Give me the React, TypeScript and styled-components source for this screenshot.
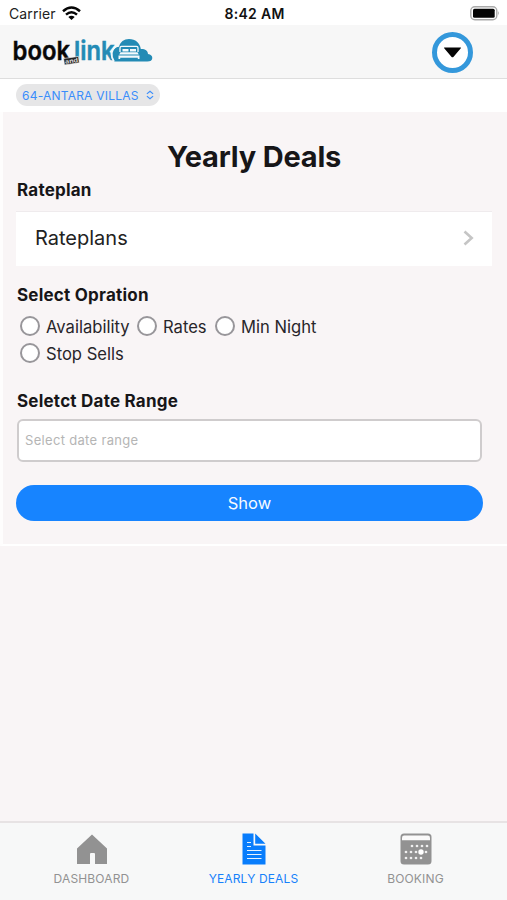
import React from 'react';
import styled, { createGlobalStyle } from 'styled-components';

const Global = createGlobalStyle`
  * { box-sizing: border-box; }
  body { margin: 0; background: #fff; font-family: Inter, "Liberation Sans", sans-serif; color: #171618; }
  h1, h2, p { margin: 0; }
  button { font: inherit; border: 0; padding: 0; cursor: pointer; }
  svg { display: block; flex: none; }
`;

const Screen = styled.div`
  width: 507px;
  height: 900px;
  display: flex;
  flex-direction: column;
  overflow: hidden;
  background: #f9f5f6;
`;

const StatusBar = styled.div`
  height: 25px;
  flex: none;
  display: grid;
  grid-template-columns: 1fr auto 1fr;
  align-items: center;
  padding: 2px 7px 0 9px;
  background: #fff;
`;

const Carrier = styled.div`
  display: flex;
  align-items: center;
  gap: 6px;
  font-size: 14px;
  line-height: 20px;
  letter-spacing: 0.1px;
  color: #222;
`;

const Clock = styled.div`
  font-size: 14px;
  font-weight: 600;
  line-height: 20px;
  letter-spacing: 0.3px;
  color: #111;
`;

const BatterySlot = styled.div`
  display: flex;
  justify-content: flex-end;
`;

const Header = styled.header`
  height: 54px;
  flex: none;
  display: flex;
  align-items: center;
  justify-content: space-between;
  padding: 1px 34px 0 12px;
  background: #f7f7f7;
  border-bottom: 1px solid #dedede;
`;

const MenuButton = styled.button`
  width: 41px;
  height: 41px;
  display: grid;
  place-items: center;
  border: 5px solid #3498db;
  border-radius: 50%;
  background: #fff;
`;

const PropertyBar = styled.div`
  height: 33px;
  flex: none;
  padding: 5px 16px;
  background: #fff;
`;

const PropertyChip = styled.button`
  width: 144px;
  height: 22px;
  display: flex;
  align-items: center;
  justify-content: space-between;
  padding: 0 6px 0 6px;
  border-radius: 11px;
  background: #e6e6e7;
  color: #3a8dfb;
  font-size: 12px;
  letter-spacing: 0.22px;
  white-space: nowrap;
`;

const Panel = styled.main`
  height: 434px;
  flex: none;
  display: flex;
  flex-direction: column;
  padding: 28px 15px 0 13px;
  border-left: 3px solid #fefdfd;
  border-bottom: 2px solid #fff;
`;

const Title = styled.h1`
  height: 34px;
  text-align: center;
  font-size: 29px;
  font-weight: 700;
  line-height: 34px;
  letter-spacing: -0.2px;
`;

const Label = styled.h2<{ $top: number }>`
  height: 22px;
  margin-top: ${(p) => p.$top}px;
  padding-left: 1px;
  font-size: 17px;
  font-weight: 700;
  line-height: 22px;
  letter-spacing: 0.22px;
`;

const RatePlanRow = styled.button`
  height: 55px;
  margin-top: 10px;
  flex: none;
  display: flex;
  align-items: center;
  justify-content: space-between;
  padding: 0 18px 2px 19px;
  border-top: 1px solid #efebed;
  background: #fff;
  color: #222;
  font-size: 20px;
`;

const Options = styled.div`
  height: 54px;
  margin-top: 7px;
  padding-left: 4px;
  display: flex;
  flex-wrap: wrap;
  align-content: flex-start;
  width: 320px;
`;

const Option = styled.label<{ $width: number }>`
  width: ${(p) => p.$width}px;
  height: 27px;
  display: flex;
  align-items: center;
  gap: 6px;
  font-size: 16.600px;
  line-height: 25px;
  white-space: nowrap;
  color: #28262a;

  span { padding-top: 2px; }
`;

const Radio = styled.input`
  appearance: none;
  width: 20px;
  height: 20px;
  flex: none;
  margin: 0 0 2px;
  border: 2px solid #98969a;
  border-radius: 50%;
  background: #fff;
`;

const DateInput = styled.input`
  width: 465px;
  height: 43px;
  margin: 7px 0 0 1px;
  flex: none;
  padding: 0 6px 1px;
  border: 2px solid #cfcccd;
  border-radius: 6px;
  background: #fff;
  font: 13px Inter, sans-serif;
  letter-spacing: 0.32px;
  outline: 0;

  &::placeholder { color: #b5b5b5; opacity: 1; }
`;

const ShowButton = styled.button`
  width: 467px;
  height: 36px;
  margin-top: 23px;
  flex: none;
  border-radius: 18px;
  background: #1784ff;
  color: #f5faff;
  font-size: 16.500px;
`;

const TabBar = styled.nav`
  height: 79px;
  flex: none;
  margin-top: auto;
  display: grid;
  grid-template-columns: 183px 141px 183px;
  background: #f7f8f8;
  border-top: 2px solid #e7e3e4;
`;

const Tab = styled.button<{ $active?: boolean }>`
  display: flex;
  flex-direction: column;
  align-items: center;
  padding-top: 10px;
  background: none;
  color: ${(p) => (p.$active ? '#1681fb' : '#929292')};
  font-size: 12px;
  line-height: 16px;
  letter-spacing: 0.15px;
  white-space: nowrap;

  svg { margin-bottom: 4px; }
`;

const Logo = () => (
  <svg width="142" height="40" viewBox="12 32 142 40" role="img" aria-label="booklink">
    <g fontFamily="Inter, sans-serif" fontSize="26">
      <text x="12.500" y="60" textLength="57.500" lengthAdjust="spacingAndGlyphs" fontWeight="600" fill="#080808" stroke="#080808" strokeWidth=".4">book</text>
      <text x="74" y="60" textLength="40.500" lengthAdjust="spacingAndGlyphs" fontWeight="600" fill="#238bb5" stroke="#238bb5" strokeWidth=".5">link</text>
    </g>
    <g transform="rotate(-8 71 61)">
      <rect x="64" y="57.500" width="15" height="6.500" fill="#242424" stroke="#f7f7f7" strokeWidth=".6" />
      <text x="65" y="63" textLength="13" lengthAdjust="spacingAndGlyphs" fill="#ddd" fontFamily="Inter, sans-serif" fontSize="6" fontWeight="700">and</text>
    </g>
    <path d="M114.500 61.500c-3.500-3-4.500-7-1.500-11 1.500-2.500 4-3.600 6-3.800 1.200-4.800 5-7.700 10-7.700 6.500 0 11 4 11.800 10 4.200-.2 7 1.500 7.200 5 3 .5 4.300 2 4.300 4 0 2.500-2 3.500-5 3.500z" fill="#238bb5" />
    <path d="M115.500 46.500q-7 6.500-1.500 15" fill="none" stroke="#f1f8fb" strokeWidth="1.700" />
    <path d="M120 52v-4q0-1.600 1.600-1.600h14.800q1.600 0 1.600 1.600v4" fill="none" stroke="#f4fafc" strokeWidth="1.300" />
    <path d="M122.500 49h6v2.500h-6zM130 49h6v2.500h-6zM120.500 52.300h17l1.300 2.200h-19.600zM118.500 55.500h21V59h-1.700v-1.300h-17.600V59h-1.700z" fill="#f4fafc" />
  </svg>
);

const Wifi = () => (
  <svg width="19" height="15" viewBox="0 0 19 15" fill="none" stroke="#050505" strokeWidth="2.500">
    <path d="M1 5.200Q9.500-2.200 18 5.200M4 8.600q5.500-4.800 11 0" />
    <path d="M6.300 11q3.200-2.600 6.400 0L9.500 14z" fill="#050505" stroke="none" />
  </svg>
);

const Battery = () => (
  <svg width="30" height="15" viewBox="0 0 30 15">
    <rect x=".8" y=".8" width="26" height="13" rx="4" fill="#fff" stroke="#aaa" strokeWidth="1.400" />
    <rect x="3" y="2.800" width="21.700" height="9" rx="1.500" fill="#050505" />
    <path d="M28.300 5q1.700 2.300 0 4.600z" fill="#999" />
  </svg>
);

const HomeIcon = () => (
  <svg width="30" height="34" viewBox="0 0 30 34">
    <path d="M15 1.500L30 15.500V31H18V21q0-1-1-1h-3q-1 0-1 1v10H0V15.500z" fill="#929292" />
  </svg>
);

const DocumentIcon = () => (
  <svg width="24" height="34" viewBox="0 0 24 34">
    <path d="M.5.500h11v12h12v19H.5zM13.200.500l10.300 10.300H13.200z" fill="#087dfc" />
    <path d="M5 9.500h4M5 13.500h4M5 17.500h14.500M5 21.500h14.500M5 25.500h14.500" stroke="#e4f1ff" strokeWidth="1.200" />
  </svg>
);

const dots = [
  [12, 13], [17, 13], [22, 13], [27, 13],
  [6, 19], [11, 19], [16, 19], [26, 19],
  [6, 25], [11, 25], [16, 25], [21, 25],
];

const CalendarIcon = () => (
  <svg width="32" height="34" viewBox="0 0 32 34">
    <rect x=".5" y=".5" width="31" height="31" rx="3.500" fill="#929292" />
    <path d="M2 7.200V4.700Q2 2.500 4.200 2.500h23.600Q30 2.500 30 4.700v2.500z" fill="#fafafa" />
    {dots.map(([x, y]) => <circle key={`${x}-${y}`} cx={x} cy={y} r="1.350" fill="#f0f0f0" />)}
    <circle cx="21" cy="19" r="2.700" fill="#fff" />
  </svg>
);

const options = [
  { name: 'Availability', width: 117 },
  { name: 'Rates', width: 78 },
  { name: 'Min Night', width: 110 },
  { name: 'Stop Sells', width: 120 },
];

export default function App() {
  return (
    <Screen>
      <Global />
      <StatusBar>
        <Carrier>Carrier <Wifi /></Carrier>
        <Clock>8:42 AM</Clock>
        <BatterySlot><Battery /></BatterySlot>
      </StatusBar>
      <Header>
        <Logo />
        <MenuButton aria-label="Open menu">
          <svg width="19" height="11" viewBox="0 0 19 11">
            <path d="M1.500.5h16q1 0 .3.800l-7.200 8.500q-1.100 1-2.200 0L1.200 1.300Q.5.500 1.500.5z" fill="#050505" />
          </svg>
        </MenuButton>
      </Header>
      <PropertyBar>
        <PropertyChip>
          <span>64-ANTARA VILLAS</span>
          <svg width="8" height="10" viewBox="0 0 9 10" fill="none" stroke="#3a8dfb" strokeWidth="1.300">
            <path d="M1 3.800L4.500.8 8 3.800M1 6.200l3.500 3L8 6.200" />
          </svg>
        </PropertyChip>
      </PropertyBar>
      <Panel>
        <Title>Yearly Deals</Title>
        <Label $top={5}>Rateplan</Label>
        <RatePlanRow>
          <span>Rateplans</span>
          <svg width="11" height="16" viewBox="0 0 11 16" fill="none" stroke="#c5c5c5" strokeWidth="2.600">
            <path d="M1.500 1.500L8.700 8l-7.200 6.500" />
          </svg>
        </RatePlanRow>
        <Label $top={18}>Select Opration</Label>
        <Options>
          {options.map((option) => (
            <Option key={option.name} $width={option.width}>
              <Radio type="radio" name="operation" />
              <span>{option.name}</span>
            </Option>
          ))}
        </Options>
        <Label $top={23}>Seletct Date Range</Label>
        <DateInput placeholder="Select date range" />
        <ShowButton>Show</ShowButton>
      </Panel>
      <TabBar>
        <Tab><HomeIcon />DASHBOARD</Tab>
        <Tab $active><DocumentIcon />YEARLY DEALS</Tab>
        <Tab><CalendarIcon />BOOKING</Tab>
      </TabBar>
    </Screen>
  );
}
